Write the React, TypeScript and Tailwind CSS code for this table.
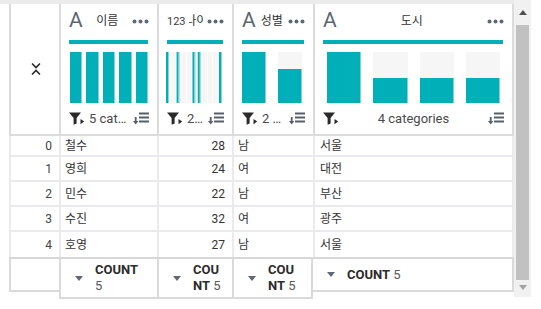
import React from 'react';

const TEAL = '#00afb8';

const cols = 'grid grid-cols-[50px_98px_75px_81px_201px]';

const Dots = () => (
  <svg width="17" height="5" viewBox="0 0 17 5" className="shrink-0">
    <circle cx="2.5" cy="2.5" r="2" fill="#5f6976" />
    <circle cx="8.5" cy="2.5" r="2" fill="#5f6976" />
    <circle cx="14.5" cy="2.5" r="2" fill="#5f6976" />
  </svg>
);

const FilterIcon = () => (
  <svg width="16" height="13" viewBox="0 0 16 13" className="shrink-0">
    <path d="M0 0.5 H12 L7.6 6 V11.5 L4.6 12.8 V6 Z" fill="#2a2a2a" />
    <path d="M11.5 7 L15.2 9.6 L11.5 12.2 Z" fill="#2a2a2a" />
  </svg>
);

const SortIcon = () => (
  <svg width="16" height="13" viewBox="0 0 16 13" className="shrink-0">
    <rect x="6" y="0.5" width="10" height="2" fill="#56606d" />
    <rect x="6" y="4.5" width="10" height="2" fill="#56606d" />
    <rect x="6" y="8.5" width="10" height="2" fill="#56606d" />
    <rect x="1.8" y="5" width="1.8" height="4.5" fill="#56606d" />
    <path d="M0 9 H5.4 L2.7 12.5 Z" fill="#56606d" />
  </svg>
);

const TypeA = () => (
  <span className="text-[21px] leading-none font-normal text-[#5b6674] shrink-0 -mt-[1px]">A</span>
);

// one bin of a bar chart: gray space above, teal bar below
const Bin = ({ pct }: { pct: number }) => (
  <div className="flex-1 flex flex-col bg-[#f6f6f6]">
    <div className="flex-1" />
    <div className="bg-[#00afb8] border-r border-[#7fd3d8]" style={{ height: `${pct}%` }} />
  </div>
);

const AgeChart = () => {
  const ages = [22, 24, 27, 28, 32];
  return (
    <svg width="56" height="51" viewBox="0 0 56 51" className="ml-[-1px]">
      {Array.from({ length: 11 }).map((_, i) => (
        <rect key={i} x={i * 5.2} y="0" width="4.4" height="51" fill="#f6f6f6" />
      ))}
      {ages.map(a => (
        <g key={a}>
          <rect x={(a - 22) * 5.3} y="0" width="2" height="51" fill={TEAL} />
          <rect x={(a - 22) * 5.3 + 2} y="0" width="1" height="51" fill="#8ad6da" />
        </g>
      ))}
    </svg>
  );
};

type HeadProps = {
  type: React.ReactNode;
  name: string;
  chart: React.ReactNode;
  summary: string;
  last?: boolean;
};

const HeadCell = ({ type, name, chart, summary, last }: HeadProps) => (
  <div
    className={`flex flex-col h-[132px] border-l-2 border-b-2 border-[#dcdcdc] pt-[8px] pl-[8px] pr-[8px] ${
      last ? 'border-r-2' : ''
    }`}
  >
    <div className="flex items-center h-[18px] gap-[3px]">
      {type}
      <div className="flex-1 min-w-0 overflow-hidden flex justify-center">
        <span className="shrink-0 whitespace-nowrap text-[12px] text-[#333]">{name}</span>
      </div>
      <Dots />
    </div>
    <div className="mt-[10px] h-[4px] bg-[#00afb8] mr-[1px]" />
    <div className="mt-[8px] h-[51px] flex">{chart}</div>
    <div className="mt-[8px] h-[14px] flex items-center gap-[4px]">
      <FilterIcon />
      <div className="flex-1 min-w-0 truncate text-center text-[13px] leading-[15px] text-[#4a4a4a]">
        {summary}
      </div>
      <SortIcon />
    </div>
  </div>
);

const rows = [
  ['0', '철수', '28', '남', '서울'],
  ['1', '영희', '24', '여', '대전'],
  ['2', '민수', '22', '남', '부산'],
  ['3', '수진', '32', '여', '광주'],
  ['4', '호영', '27', '남', '서울'],
];

const Tri = () => (
  <svg width="8" height="5" viewBox="0 0 8 5" className="shrink-0">
    <path d="M0 0 H8 L4 5 Z" fill="#5f6976" />
  </svg>
);

const FootCell = ({ cls }: { cls: string }) => (
  <div className={`flex items-center min-h-[33px] py-[3px] pl-[14px] pr-[11px] border-b-2 border-[#dadada] ${cls}`}>
    <Tri />
    <div className="ml-[12px] flex-1 min-w-0 break-all text-[13px] leading-[16px]">
      <span className="font-bold text-[#2b2b2b]">COUNT</span> <span className="text-[#5a5a5a]">5</span>
    </div>
  </div>
);

export default function App() {
  return (
    <div className="w-[541px] h-[309px] bg-white flex items-start font-['Roboto','Noto_Sans_CJK_KR',sans-serif] overflow-hidden">
      <div className="w-[514px] flex flex-col">
        <div className="h-[4px] bg-[#ebebeb]" />
        <div className="ml-[9px] flex flex-col">
          {/* header */}
          <div className={cols}>
            <div className="h-[132px] border-l-2 border-b-2 border-[#dcdcdc] flex items-center justify-center pl-[1px]">
              <svg width="10" height="14" viewBox="0 0 10 14">
                <path d="M1 1.5 L5 5.5 L9 1.5" fill="none" stroke="#2a2a2a" strokeWidth="1.6" />
                <path d="M1 12.5 L5 8.5 L9 12.5" fill="none" stroke="#2a2a2a" strokeWidth="1.6" />
              </svg>
            </div>
            <HeadCell
              type={<TypeA />}
              name="이름"
              summary="5 categories"
              chart={
                <div className="flex-1 flex gap-[4px] px-[1px]">
                  <Bin pct={100} />
                  <Bin pct={100} />
                  <Bin pct={100} />
                  <Bin pct={100} />
                  <Bin pct={100} />
                </div>
              }
            />
            <HeadCell
              type={<span className="text-[11px] text-[#3d3d3d] shrink-0 leading-none">123</span>}
              name="나이"
              summary="2 - 32"
              chart={<AgeChart />}
            />
            <HeadCell
              type={<TypeA />}
              name="성별"
              summary="2 categories"
              chart={
                <div className="flex-1 flex gap-[12px] pr-[3px]">
                  <Bin pct={100} />
                  <Bin pct={67} />
                </div>
              }
            />
            <HeadCell
              type={<TypeA />}
              name="도시"
              summary="4 categories"
              last
              chart={
                <div className="flex-1 flex gap-[12px] pl-[4px] pr-[4px]">
                  <Bin pct={100} />
                  <Bin pct={50} />
                  <Bin pct={50} />
                  <Bin pct={50} />
                </div>
              }
            />
          </div>

          {/* body */}
          {rows.map((r, i) => (
            <div
              key={r[0]}
              className={`${cols} text-[12px] text-[#333] ${i === 0 ? 'h-[21px]' : 'h-[25px]'} ${
                i < rows.length - 1 ? 'border-b-2 border-[#e9e9ee]' : ''
              }`}
            >
              <div className="flex items-center justify-end pr-[7px] border-l-2 border-[#ebebef] text-[#444]">{r[0]}</div>
              <div className="flex items-center pl-[4px] border-l-2 border-[#ebebef]">{r[1]}</div>
              <div className="flex items-center justify-end pr-[7px] border-l-2 border-[#ebebef]">{r[2]}</div>
              <div className="flex items-center pl-[4px] border-l-2 border-[#ebebef]">{r[3]}</div>
              <div className="flex items-center pl-[5px] border-l-2 border-r-2 border-[#ebebef]">{r[4]}</div>
            </div>
          ))}

          {/* footer */}
          <div className={`${cols} items-start border-t-2 border-[#d8d8d8]`}>
            <div className="h-[33px] border-l-2 border-b-2 border-[#dadada]" />
            <FootCell cls="border-l-2" />
            <FootCell cls="border-l-2" />
            <FootCell cls="border-l-2 border-r-2" />
            <FootCell cls="border-r-2" />
          </div>
        </div>
      </div>

      {/* vertical scrollbar */}
      <div className="w-[17px] h-[297px] bg-[#f1f1f1] flex flex-col items-center">
        <svg width="8" height="5" viewBox="0 0 8 5" className="mt-[10px]">
          <path d="M0 5 L4 0 L8 5 Z" fill="#505050" />
        </svg>
        <div className="mt-[10px] w-[13px] h-[255px] bg-[#c1c1c1]" />
        <svg width="8" height="5" viewBox="0 0 8 5" className="mt-[5px]">
          <path d="M0 0 H8 L4 5 Z" fill="#a3a3a3" />
        </svg>
      </div>
    </div>
  );
}
